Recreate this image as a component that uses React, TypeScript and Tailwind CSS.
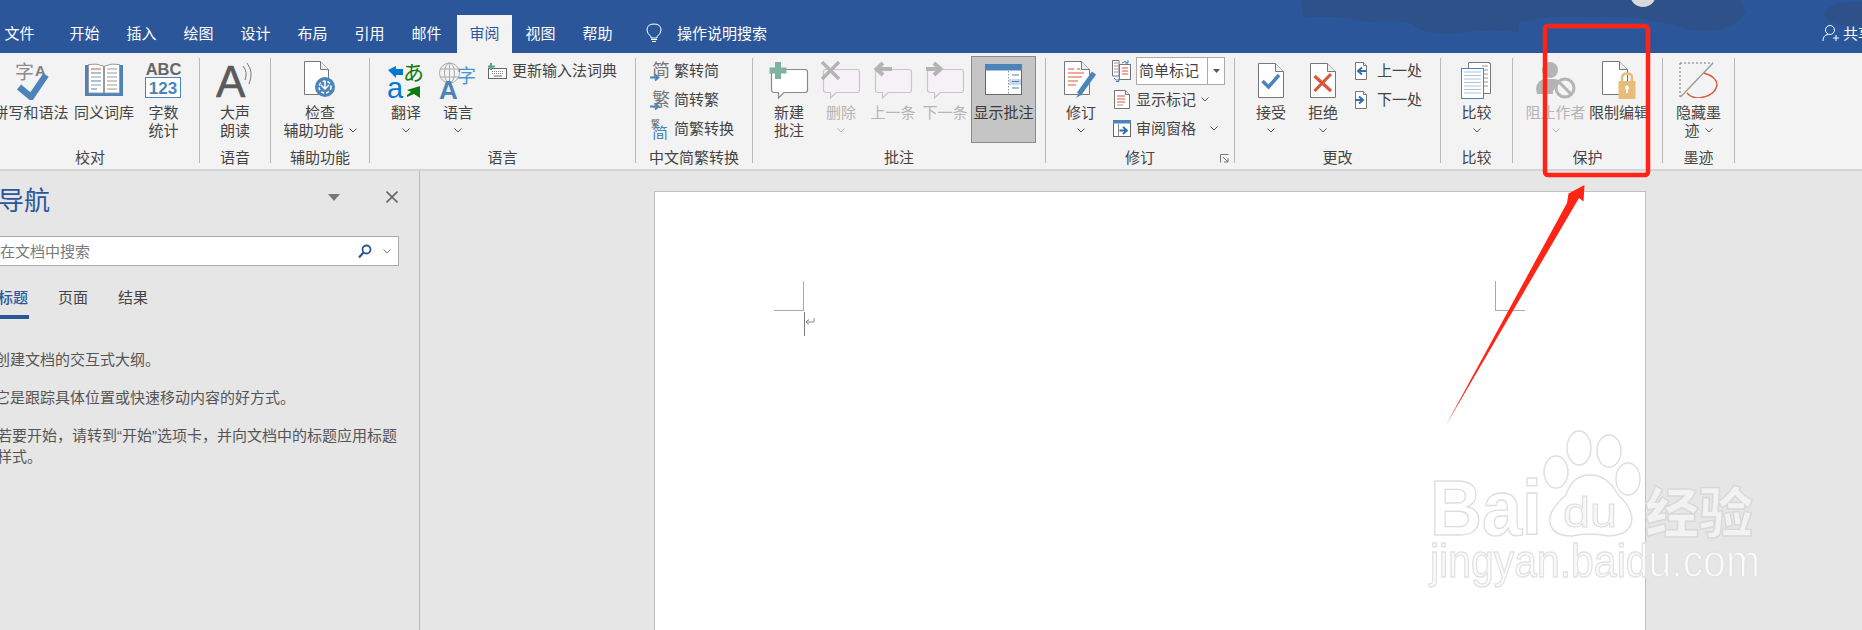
import React from "react";

const Chev = ({ c = "#555" }: { c?: string }) => (
  <svg width="8" height="5" viewBox="0 0 8 5" className="shrink-0">
    <path d="M0.5 0.5L4 4L7.5 0.5" fill="none" stroke={c} strokeWidth="1" />
  </svg>
);

function Big({
  w,
  icon,
  l1,
  l2,
  chev,
  dim,
}: {
  w: string;
  icon: React.ReactNode;
  l1: string;
  l2?: string;
  chev?: boolean;
  dim?: boolean;
}) {
  return (
    <div className={`${w} flex flex-col items-center shrink-0 ${dim ? "text-[#b4b4b4]" : "text-[#444]"}`}>
      <div className="h-[44px] flex items-center justify-center shrink-0">{icon}</div>
      <div className="leading-[19px] whitespace-nowrap">{l1}</div>
      <div className="h-[19px] flex items-center justify-center gap-[5px] whitespace-nowrap">
        {l2}
        {chev && <Chev c={dim ? "#b4b4b4" : "#555"} />}
      </div>
    </div>
  );
}

function Group({
  className,
  pad = "",
  label,
  children,
}: {
  className: string;
  pad?: string;
  label: string;
  children: React.ReactNode;
}) {
  return (
    <div className={`${className} relative h-[105px] shrink-0 border-r border-[#b8b8b8] flex flex-col`}>
      <div className={`h-[90px] shrink-0 flex ${pad}`}>{children}</div>
      <div className="h-[15px] leading-[18px] text-center text-[#444] whitespace-nowrap">{label}</div>
    </div>
  );
}

const Doc = ({
  w = 25,
  h = 34,
  f = 8,
  x = 0.5,
  y = 0.5,
  fill = "#fff",
  stroke = "#777",
}: {
  w?: number;
  h?: number;
  f?: number;
  x?: number;
  y?: number;
  fill?: string;
  stroke?: string;
}) => (
  <g>
    <path d={`M${x} ${y}H${x + w - f}L${x + w} ${y + f}V${y + h}H${x}Z`} fill={fill} stroke={stroke} />
    <path d={`M${x + w - f} ${y}V${y + f}H${x + w}`} fill="#eee" stroke={stroke} />
  </g>
);

const SpellIcon = () => (
  <svg width="36" height="40" viewBox="0 0 36 40">
    <text x="2" y="19" fontSize="19" fill="#8c8c8c" fontFamily="'Noto Sans CJK SC',sans-serif">字</text>
    <text x="22" y="16" fontSize="15" fontWeight="700" fill="#808080" fontFamily="'Liberation Sans',sans-serif">A</text>
    <path d="M6 27L18 37L33 15" fill="none" stroke="#4c83b9" strokeWidth="6.5" />
  </svg>
);

const BookIcon = () => (
  <svg width="38" height="34" viewBox="0 0 38 34">
    <path d="M0 2H3V30H35V2H38V33H0Z" fill="#4c83b9" />
    <path d="M3.5 1.5Q11 0 18.5 3V30H3.5Z M19.5 3Q27 0 34.5 1.5V30H19.5Z" fill="#fff" stroke="#999" />
    <path d="M6 6H16" stroke="#d9573a" strokeWidth="1" />
    <path d="M6 10H16M6 18H16M6 26H12" stroke="#4c83b9" strokeWidth="1" />
    <path d="M6 14H16M6 22H16M22 6H32M22 10H32M22 14H32M22 18H32M22 22H32M22 26H32" stroke="#999" strokeWidth="1" />
  </svg>
);

const CountIcon = () => (
  <svg width="37" height="36" viewBox="0 0 37 36">
    <text x="18.5" y="13" textAnchor="middle" fontSize="16.5" fontWeight="700" fill="#666" fontFamily="'Liberation Sans',sans-serif">ABC</text>
    <rect x="0.5" y="15.5" width="35" height="20" fill="#fff" stroke="#4c83b9" />
    <text x="18" y="32" textAnchor="middle" fontSize="17" fontWeight="700" fill="#4c83b9" fontFamily="'Liberation Sans',sans-serif">123</text>
  </svg>
);

const SpeakIcon = () => (
  <svg width="38" height="36" viewBox="0 0 38 36">
    <text x="0" y="35" fontSize="44" fill="#5a5a5a" fontFamily="'Liberation Sans',sans-serif" stroke="#5a5a5a" strokeWidth="0.6">A</text>
    <path d="M27 4Q32 10 29 18M31 1Q38 10 33 22" fill="none" stroke="#777" strokeWidth="1" />
  </svg>
);

const CheckAccIcon = () => (
  <svg width="32" height="38" viewBox="0 0 32 38">
    <Doc w={24} h={33} />
    <circle cx="21" cy="26" r="10" fill="#4c83b9" />
    <circle cx="21" cy="26" r="6" fill="none" stroke="#fff" strokeWidth="1.5" strokeDasharray="3 2" />
    <path d="M21 20V27M17 24L21 28L25 24" fill="none" stroke="#fff" strokeWidth="1.5" />
  </svg>
);

const TranslateIcon = () => (
  <svg width="36" height="37" viewBox="0 0 36 37">
    <path d="M0 8L8 4V7H15V13H8V16Z" fill="#0078d4" />
    <text x="15" y="18" fontSize="21" fill="#107c10" fontFamily="'Noto Sans CJK JP',sans-serif">あ</text>
    <text x="-1" y="36" fontSize="29" fill="#0078d4" fontFamily="'Liberation Sans',sans-serif">a</text>
    <path d="M32 36L32 24L19 28L23 30L19 33V35L26 32Z" fill="#107c10" />
  </svg>
);

const LangIcon = () => (
  <svg width="38" height="37" viewBox="0 0 38 37">
    <circle cx="10.5" cy="11" r="10" fill="none" stroke="#aaa" />
    <ellipse cx="10.5" cy="11" rx="5" ry="10" fill="none" stroke="#aaa" />
    <path d="M1 7H20M1 15H20M10.5 1V21" stroke="#aaa" />
    <text x="0" y="37" fontSize="26" fontWeight="700" fill="#4c83b9" fontFamily="'Liberation Sans',sans-serif">A</text>
    <text x="18" y="21" fontSize="19" fill="#4c96d0" fontFamily="'Noto Sans CJK SC',sans-serif">字</text>
  </svg>
);

const ImeIcon = () => (
  <svg width="19" height="16" viewBox="0 0 19 16">
    <rect x="0.5" y="5.5" width="18" height="10" fill="#fff" stroke="#666" />
    <path d="M4 8.5H16M4 10.5H16" stroke="#888" strokeDasharray="1 1" />
    <path d="M6 13H14" stroke="#666" />
    <path d="M3 0V7M0 3.5H7" stroke="#5aa08a" strokeWidth="2" />
  </svg>
);

const ConvIcon = ({ ch, top }: { ch: string; top?: boolean }) => (
  <svg width="20" height="22" viewBox="0 0 20 22">
    {top ? (
      <>
        <text x="1" y="9" fontSize="9" fill="#666" fontFamily="'Noto Sans CJK SC',sans-serif">繁</text>
        <text x="2" y="21" fontSize="16" fill="#4c83b9" fontFamily="'Noto Sans CJK SC',sans-serif">{ch}</text>
      </>
    ) : (
      <>
        <text x="2" y="17" fontSize="18" fill="#777" fontFamily="'Noto Sans CJK SC',sans-serif">{ch}</text>
        <path d="M0 17.5H8M5 14.5L8.5 17.5L5 20.5" fill="none" stroke="#4c83b9" strokeWidth="1.8" />
      </>
    )}
  </svg>
);

const Bubble = ({ dim, kind }: { dim?: boolean; kind: "plus" | "x" | "left" | "right" }) => {
  const s = dim ? "#c6c6c6" : "#8a8a8a";
  return (
    <svg width="40" height="38" viewBox="0 0 40 38">
      <path
        d="M5 8.5H36Q38.5 8.5 38.5 11V29Q38.5 31.5 36 31.5H15L9.5 37V31.5H5Q2.5 31.5 2.5 29V11Q2.5 8.5 5 8.5Z"
        fill={dim ? "#f5f1f7" : "#fff"}
        stroke={s}
        strokeWidth="1.2"
      />
      {kind === "plus" && <path d="M9 1V18M0.5 9.5H17.5" stroke="#7fb29f" strokeWidth="6" />}
      {kind === "x" && <path d="M1 1L18 18M18 1L1 18" stroke="#b4b4b4" strokeWidth="3.5" />}
      {kind === "left" && <path d="M19 8H4M10 2L3.5 8L10 14" fill="none" stroke="#b4b4b4" strokeWidth="4" />}
      {kind === "right" && <path d="M1 8H15M9 2L15.5 8L9 14" fill="none" stroke="#b4b4b4" strokeWidth="4" />}
    </svg>
  );
};

const ShowIcon = () => (
  <svg width="37" height="31" viewBox="0 0 37 31">
    <rect x="0.5" y="0.5" width="36" height="30" fill="#fff" stroke="#666" />
    <rect x="0" y="0" width="37" height="6.5" fill="#4c83b9" />
    <path d="M23.5 7V30" stroke="#999" strokeDasharray="1.5 1.5" />
    <rect x="24" y="15" width="12" height="6" fill="#c7d9ea" />
    <path d="M27 11H34M27 17.5H34M27 24H34" stroke="#4c83b9" strokeWidth="1.2" />
  </svg>
);

const TrackIcon = () => (
  <svg width="34" height="38" viewBox="0 0 34 38">
    <Doc w={25} h={33} />
    <path d="M4 8H10M13 8H16M4 12H20M4 16H18M4 20H14M4 24H12" stroke="#d9573a" strokeWidth="1" />
    <path d="M30 12L15 33" stroke="#4c83b9" strokeWidth="5" />
    <path d="M12 37L15 32L17 34Z" fill="#4c83b9" />
  </svg>
);

const MarkupIcon = () => (
  <svg width="20" height="22" viewBox="0 0 20 22">
    <path d="M0.5 0.5H7V16H0.5Z" fill="#fff" stroke="#777" />
    <path d="M2 3H6M2 6H6M2 9H6M2 12H6" stroke="#999" />
    <rect x="7.5" y="4.5" width="11" height="15" fill="#fff" stroke="#777" />
    <path d="M10 8H16M10 11H16M10 14H16" stroke="#d9573a" />
    <path d="M10 3Q13 0 16 3M16 0V3H13" fill="none" stroke="#4c83b9" />
    <path d="M2 18Q3 21 7 20M4 21.5H7V18.5" fill="none" stroke="#4c83b9" />
  </svg>
);

const ShowMarkIcon = () => (
  <svg width="16" height="19" viewBox="0 0 16 19">
    <Doc w={15} h={18} f={4} />
    <path d="M3 6H11M3 9H11M3 12H11" stroke="#d9573a" />
    <path d="M3 15H9" stroke="#999" />
  </svg>
);

const PaneIcon = () => (
  <svg width="18" height="17" viewBox="0 0 18 17">
    <rect x="0.5" y="0.5" width="17" height="16" fill="#fff" stroke="#666" />
    <rect width="18" height="3.5" fill="#4c83b9" />
    <path d="M5.5 4V16" stroke="#888" />
    <path d="M6.5 10.5H13M10 7L14 10.5L10 14" fill="none" stroke="#2f6fb0" strokeWidth="1.8" />
  </svg>
);

const AcceptIcon = () => (
  <svg width="26" height="35" viewBox="0 0 26 35">
    <Doc />
    <path d="M4.5 18L10.5 24L21 12" fill="none" stroke="#4c83b9" strokeWidth="3.5" />
  </svg>
);
const RejectIcon = () => (
  <svg width="26" height="35" viewBox="0 0 26 35">
    <Doc />
    <path d="M4.5 13L21 28M21 11L4.5 28" fill="none" stroke="#d9573a" strokeWidth="3.2" />
  </svg>
);

const PrevIcon = ({ right }: { right?: boolean }) => (
  <svg width="12" height="18" viewBox="0 0 12 18">
    <Doc w={11} h={17} f={3} />
    {right ? (
      <path d="M0 9H7M4 5.5L8 9L4 12.5" fill="none" stroke="#2f6fb0" strokeWidth="2" />
    ) : (
      <path d="M11 9H4M7 5.5L3 9L7 12.5" fill="none" stroke="#2f6fb0" strokeWidth="2" />
    )}
  </svg>
);

const CompareIcon = () => (
  <svg width="31" height="37" viewBox="0 0 31 37">
    <Doc x={7.5} y={0.5} w={22} h={31} f={1} />
    <path d="M21 4H27M21 8H27M21 12H27M21 16H27M21 20H27M21 24H27" stroke="#999" />
    <rect x="0.5" y="6.5" width="22" height="30" fill="#fff" stroke="#4c83b9" />
    <path d="M3 10H20M3 13.5H20M3 17H20M3 20.5H20M3 24H20M3 27.5H20M3 31H20" stroke="#a9c3dd" />
  </svg>
);

const BlockIcon = () => (
  <svg width="40" height="38" viewBox="0 0 40 38">
    <circle cx="14" cy="9" r="8" fill="#b4b4b4" />
    <path d="M0 28Q1 18 10 18H18Q22 18 24 21L17 30V33H1Z" fill="#b4b4b4" />
    <circle cx="29" cy="27" r="9" fill="#f3f3f3" stroke="#b4b4b4" strokeWidth="3" />
    <path d="M23 21L35 33" stroke="#b4b4b4" strokeWidth="3" />
  </svg>
);

const LockIcon = () => (
  <svg width="35" height="38" viewBox="0 0 35 38">
    <Doc w={25} h={33} />
    <rect x="16.5" y="20" width="17" height="18" rx="1" fill="#e7bd79" />
    <path d="M20 21V17Q20 12.5 25 12.5Q30 12.5 30 17V21" fill="none" stroke="#e7bd79" strokeWidth="2.5" />
    <circle cx="25" cy="26.5" r="2" fill="#fff" />
    <path d="M25 27V32" stroke="#fff" strokeWidth="2" />
  </svg>
);

const InkIcon = () => (
  <svg width="40" height="36" viewBox="0 0 40 36">
    <path d="M1 1H34M1 1V35" fill="none" stroke="#777" strokeDasharray="2 2" />
    <path d="M1.5 35L34 1" stroke="#999" strokeWidth="1.3" />
    <path d="M25 11Q38 15 38 23Q36 34 20 36Q12 36 8 31" fill="none" stroke="#d9573a" strokeWidth="1.4" />
  </svg>
);

const Row = ({ children, className = "" }: { children: React.ReactNode; className?: string }) => (
  <div className={`flex items-center whitespace-nowrap text-[#444] ${className}`}>{children}</div>
);

const tabs = ["插入", "绘图", "设计", "布局", "引用", "邮件"];

export default function App() {
  return (
    <div className="relative w-[1862px] h-[630px] overflow-hidden bg-[#e6e6e6] text-[15px] font-['Noto_Sans_CJK_SC','Liberation_Sans',sans-serif]">
      {/* title bar */}
      <div className="relative h-[53px] bg-[#2b579a] flex items-end text-white overflow-hidden">
        <svg className="absolute inset-0" width="1862" height="53" viewBox="0 0 1862 53">
          <path
            d="M1301 0L1303 18Q1330 14 1370 22Q1405 20 1412 24Q1420 33 1450 34Q1490 28 1518 32L1520 22Q1550 15 1590 17Q1640 14 1690 30Q1730 36 1746 12L1740 0Z"
            fill="#2d5188"
          />
          <circle cx="1643" cy="-6" r="13" fill="#d9d9d9" />
          <ellipse cx="1856" cy="14" rx="32" ry="12" fill="#2d5188" />
        </svg>
        <div className="relative h-[38px] w-[31px] ml-[4px] mr-[21px] pb-[2px] flex items-center justify-center">文件</div>
        <div className="relative h-[38px] w-[57px] pb-[2px] flex items-center justify-center">开始</div>
        {tabs.map((t) => (
          <div key={t} className="relative h-[38px] w-[57px] pb-[2px] flex items-center justify-center">{t}</div>
        ))}
        <div className="relative h-[38px] w-[55px] ml-[2px] pb-[2px] flex items-center justify-center bg-[#f3f3f3] text-[#2b579a]">审阅</div>
        <div className="relative h-[38px] w-[57px] pb-[2px] flex items-center justify-center">视图</div>
        <div className="relative h-[38px] w-[57px] pb-[2px] flex items-center justify-center">帮助</div>
        <div className="relative h-[38px] ml-[20px] pb-[2px] flex items-center">
          <svg width="16" height="20" viewBox="0 0 16 20">
            <path d="M5 13.5Q1 11 1 7Q1 1 8 1Q15 1 15 7Q15 11 11 13.5V15H5Z" fill="none" stroke="#fff" />
            <path d="M5 16.5H11M6 18.5H10" stroke="#fff" />
          </svg>
          <span className="ml-[15px]">操作说明搜索</span>
        </div>
        <div className="relative ml-auto mr-[-11px] h-[38px] pb-[2px] flex items-center whitespace-nowrap">
          <svg width="18" height="18" viewBox="0 0 18 18">
            <circle cx="8" cy="6" r="4.5" fill="none" stroke="#fff" />
            <path d="M1 17Q1 11 6 10.5M14 11V17M11 14H17" fill="none" stroke="#fff" />
          </svg>
          <span className="ml-[3px]">共享</span>
        </div>
      </div>

      {/* ribbon */}
      <div className="h-[118px] bg-[#f3f3f3] border-b-2 border-[#d4d4d4] pt-[5px] flex">
        <Group className="w-[219px] ml-[-19px]" pad="pl-[10px]" label="校对">
          <Big w="w-[80px]" icon={<SpellIcon />} l1="拼写和语法" />
          <Big w="w-[66px]" icon={<BookIcon />} l1="同义词库" />
          <Big w="w-[53px]" icon={<CountIcon />} l1="字数" l2="统计" />
        </Group>
        <Group className="w-[71px]" label="语音">
          <Big w="w-[70px]" icon={<SpeakIcon />} l1="大声" l2="朗读" />
        </Group>
        <Group className="w-[99px]" label="辅助功能">
          <Big w="w-[98px]" icon={<CheckAccIcon />} l1="检查" l2="辅助功能" chev />
        </Group>
        <Group className="w-[266px]" pad="pl-[10px]" label="语言">
          <Big w="w-[52px]" icon={<TranslateIcon />} l1="翻译" chev />
          <Big w="w-[52px]" icon={<LangIcon />} l1="语言" chev />
          <Row className="h-[29px] ml-[4px] mt-[-2px] gap-[5px]">
            <ImeIcon />
            <span>更新输入法词典</span>
          </Row>
        </Group>
        <Group className="w-[117px]" pad="pl-[14px]" label="中文简繁转换">
          <div className="flex flex-col mt-[-2px]">
            <Row className="h-[29px] gap-[4px]">
              <ConvIcon ch="简" />
              <span>繁转简</span>
            </Row>
            <Row className="h-[29px] gap-[4px]">
              <ConvIcon ch="繁" />
              <span>简转繁</span>
            </Row>
            <Row className="h-[29px] gap-[4px]">
              <ConvIcon ch="简" top />
              <span>简繁转换</span>
            </Row>
          </div>
        </Group>
        <Group className="w-[293px]" pad="pl-[10px]" label="批注">
          <Big w="w-[52px]" icon={<Bubble kind="plus" />} l1="新建" l2="批注" />
          <Big w="w-[52px]" dim icon={<Bubble dim kind="x" />} l1="删除" chev />
          <Big w="w-[52px]" dim icon={<Bubble dim kind="left" />} l1="上一条" />
          <Big w="w-[52px]" dim icon={<Bubble dim kind="right" />} l1="下一条" />
          <div className="w-[65px] h-[87px] mt-[-2px] shrink-0 bg-[#c5c5c5] border border-[#8a8a8a] flex flex-col items-center text-[#3a3a3a]">
            <div className="h-[45px] flex items-center justify-center shrink-0">
              <ShowIcon />
            </div>
            <div className="leading-[19px] whitespace-nowrap">显示批注</div>
          </div>
        </Group>
        <Group className="w-[189px]" pad="pl-[8px]" label="修订">
          <Big w="w-[54px]" icon={<TrackIcon />} l1="修订" chev />
          <div className="flex flex-col mt-[-2px] ml-[4px]">
            <Row className="h-[29px] gap-[4px]">
              <MarkupIcon />
              <div className="w-[89px] h-[28px] bg-white border border-[#ababab] flex items-center">
                <span className="flex-1 pl-[2px]">简单标记</span>
                <div className="w-[17px] h-full border-l border-[#ababab] flex items-center justify-center">
                  <svg width="7" height="4" viewBox="0 0 7 4">
                    <path d="M0 0H7L3.5 4Z" fill="#555" />
                  </svg>
                </div>
              </div>
            </Row>
            <Row className="h-[29px] pl-[2px]">
              <ShowMarkIcon />
              <span className="ml-[6px]">显示标记</span>
              <span className="ml-[5px]">
                <Chev />
              </span>
            </Row>
            <Row className="h-[29px] pl-[1px]">
              <PaneIcon />
              <span className="ml-[5px]">审阅窗格</span>
              <span className="ml-[14px]">
                <Chev />
              </span>
            </Row>
          </div>
          <svg className="absolute right-[5px] bottom-0" width="9" height="9" viewBox="0 0 9 9">
            <path d="M0.5 8.5V0.5H8.5M3 3L8 8M8 4V8H4" fill="none" stroke="#777" />
          </svg>
        </Group>
        <Group className="w-[206px]" pad="pl-[10px]" label="更改">
          <Big w="w-[52px]" icon={<AcceptIcon />} l1="接受" chev />
          <Big w="w-[52px]" icon={<RejectIcon />} l1="拒绝" chev />
          <div className="flex flex-col mt-[-2px] ml-[6px]">
            <Row className="h-[29px] gap-[10px]">
              <PrevIcon />
              <span>上一处</span>
            </Row>
            <Row className="h-[29px] gap-[10px]">
              <PrevIcon right />
              <span>下一处</span>
            </Row>
          </div>
        </Group>
        <Group className="w-[72px]" label="比较">
          <Big w="w-[71px]" icon={<CompareIcon />} l1="比较" chev />
        </Group>
        <Group className="w-[150px]" pad="pl-[11px]" label="保护">
          <Big w="w-[63px]" dim icon={<BlockIcon />} l1="阻止作者" chev />
          <Big w="w-[64px]" icon={<LockIcon />} l1="限制编辑" />
        </Group>
        <Group className="w-[72px]" label="墨迹">
          <Big w="w-[71px]" icon={<InkIcon />} l1="隐藏墨" l2="迹" chev />
        </Group>
      </div>

      {/* body */}
      <div className="flex h-[459px]">
        <div className="w-[420px] shrink-0 border-r border-[#b8b8b8] relative overflow-hidden">
          <div className="h-[52px] flex items-center">
            <span className="text-[26px] leading-[30px] text-[#2b579a] mt-[4px] ml-[-2px]">导航</span>
            <svg className="ml-auto" width="12" height="7" viewBox="0 0 12 7">
              <path d="M0 0H12L6 7Z" fill="#777" />
            </svg>
            <svg className="ml-[46px] mr-[21px]" width="12" height="12" viewBox="0 0 12 12">
              <path d="M0.5 0.5L11.5 11.5M11.5 0.5L0.5 11.5" stroke="#666" strokeWidth="1.6" />
            </svg>
          </div>
          <div className="ml-[-2px] mt-[13px] w-[401px] h-[30px] bg-white border border-[#ababab] flex items-center text-[#7a7a7a]">
            <span className="pl-[1px]">在文档中搜索</span>
            <svg className="ml-auto" width="14" height="15" viewBox="0 0 14 15">
              <circle cx="8.5" cy="5.5" r="4" fill="none" stroke="#2b579a" strokeWidth="1.8" />
              <path d="M5.5 8.5L1 13.5" stroke="#2b579a" strokeWidth="2.2" />
            </svg>
            <span className="ml-[11px] mr-[7px]">
              <Chev c="#777" />
            </span>
          </div>
          <div className="flex mt-[21px] h-[32px] text-[#444] whitespace-nowrap">
            <div className="w-[29px] h-[32px] border-b-4 border-[#2b579a] text-[#2b579a] font-medium leading-[20px] overflow-visible">
              <span className="ml-[-2px]">标题</span>
            </div>
            <div className="ml-[29px] leading-[20px]">页面</div>
            <div className="ml-[30px] leading-[20px]">结果</div>
          </div>
          <div className="mt-[30px] leading-[20px] text-[#555] whitespace-nowrap">
            <p className="-ml-[5px]">创建文档的交互式大纲。</p>
            <p className="mt-[18px] -ml-[5px]">它是跟踪具体位置或快速移动内容的好方式。</p>
            <p className="mt-[18px] -ml-[3px]">
              若要开始，请转到<span className="font-['Liberation_Sans',sans-serif]">“</span>开始<span className="font-['Liberation_Sans',sans-serif]">”</span>选项卡，并向文档中的标题应用标题
            </p>
            <p className="-ml-[3px]">样式。</p>
          </div>
        </div>
        <div className="flex-1 pl-[234px] pt-[20px]">
          <div className="w-[992px] h-[440px] bg-white border border-b-0 border-[#c0c0c0]">
            <div className="flex justify-between pl-[119px] pr-[120px] pt-[89px]">
              <div className="w-[30px] h-[30px] border-r border-b border-[#aaa]" />
              <div className="w-[30px] h-[30px] border-l border-b border-[#aaa]" />
            </div>
            <div className="flex pl-[149px] mt-[1px]">
              <div className="w-[1px] h-[24px] bg-[#777]" />
              <svg className="mt-[6px]" width="10" height="8" viewBox="0 0 10 8">
                <path d="M9 0V4H1M4 1.5L1 4L4 6.5" fill="none" stroke="#888" />
              </svg>
            </div>
          </div>
        </div>
      </div>

      {/* watermark + annotation over the screenshot */}
      <svg className="absolute inset-0 pointer-events-none" width="1862" height="630" viewBox="0 0 1862 630">
        <g stroke="#dedede" strokeWidth="1.4" fill="#ffffff" className="blur-[0.4px]">
          <text x="1430" y="535" fontSize="78" fontWeight="700" textLength="112" lengthAdjust="spacingAndGlyphs" fontFamily="'Liberation Sans',sans-serif">Bai</text>
          <ellipse cx="1579" cy="448" rx="12" ry="17" />
          <ellipse cx="1609" cy="451" rx="12" ry="16" />
          <ellipse cx="1556" cy="472" rx="12" ry="16" />
          <ellipse cx="1628" cy="479" rx="12" ry="16" />
          <path d="M1590 475Q1572 475 1566 495Q1548 510 1550 523Q1553 536 1572 536Q1590 532 1608 536Q1632 535 1632 518Q1630 505 1618 495Q1608 475 1590 475Z" />
          <text x="1563" y="527" fontSize="42" textLength="54" lengthAdjust="spacingAndGlyphs" fill="#f7f7f7" fontFamily="'Liberation Sans',sans-serif" strokeWidth="1">du</text>
          <text x="1645" y="533" fontSize="54" fontWeight="900" fill="#f2f2f2" stroke="#d8d8d8" fontFamily="'Noto Sans CJK SC',sans-serif">经验</text>
          <text x="1430" y="577" fontSize="47" fill="#fbfbfb" stroke="#e2e2e2" textLength="330" lengthAdjust="spacingAndGlyphs" fontFamily="'Liberation Sans',sans-serif">jingyan.baidu.com</text>
        </g>
        <rect x="1545" y="26" width="103" height="149" rx="3" fill="none" stroke="#ff2416" strokeWidth="4.5" />
        <path d="M1446 425L1567 203L1568.5 193.5L1584.5 185L1583.5 201.5L1579 198Z" fill="#ff2416" />
      </svg>
    </div>
  );
}
